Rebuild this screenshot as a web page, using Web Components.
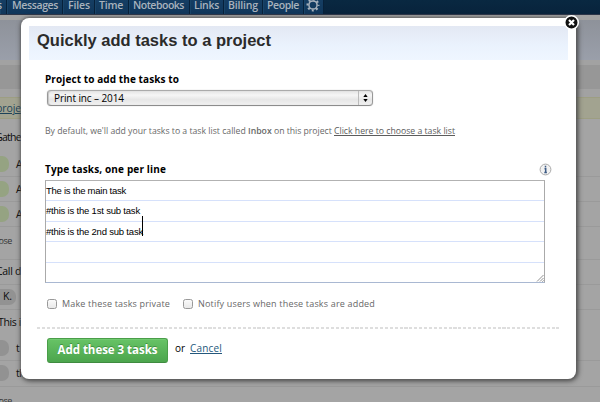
<!DOCTYPE html>
<html lang="en"><head><meta charset="utf-8"><title>Quickly add tasks to a project</title>
<style>
html,body{margin:0;height:100%;overflow:hidden;background:#a3a3a3}
body{font:10px "Open Sans","Noto Sans",sans-serif;color:#000}
</style></head><body>
<task-app></task-app>
<script>
const define=(name,html,setup)=>{
  const t=document.createElement('template');t.innerHTML=html;
  customElements.define(name,class extends HTMLElement{
    constructor(){super();this.attachShadow({mode:'open'}).append(t.content.cloneNode(true));}
    connectedCallback(){if(setup)setup(this,this.shadowRoot);}
  });
};

/* Text whose tracking is tuned so that the run fills the width in "w". */
define('fit-text',`<style>:host{display:inline-block;white-space:pre;flex:none;text-decoration:inherit}span{display:inline-block;text-decoration:inherit}</style><span><slot></slot></span>`,(el,r)=>{
  const s=r.querySelector('span'),w=+el.getAttribute('w');
  const n=el.textContent.length;
  s.style.letterSpacing=(w-s.getBoundingClientRect().width)/n+'px';
  el.style.width=w+'px';
});

define('nav-item',`<style>
:host{display:flex;box-sizing:border-box;height:14px;padding-left:5px;border-right:1px solid #07213a;box-shadow:inset 1px 0 #194468;background:linear-gradient(#153e63,#10365a);flex:none}
.t{font:600 10.5px/14px "Open Sans","Noto Sans",sans-serif;color:#a9b3bd;height:14px;margin-top:-2px}
</style><div class="t"><slot></slot></div>`,(el)=>{el.style.width=el.getAttribute('width')+'px';});

define('nav-bar',`<style>
:host{display:flex;flex:none;height:14px;background:linear-gradient(#092841,#08233c);border-bottom:1px solid #2c3548}
svg{display:block;margin:0 0 0 -3px}
</style>
<nav-item width="7" style="padding-left:0"><fit-text w="5" style="margin-left:-3px">s</fit-text></nav-item>
<nav-item width="56"><fit-text w="46">Messages</fit-text></nav-item>
<nav-item width="32"><fit-text w="22">Files</fit-text></nav-item>
<nav-item width="34" style="padding-left:4px"><fit-text w="24">Time</fit-text></nav-item>
<nav-item width="61" style="padding-left:4px"><fit-text w="51">Notebooks</fit-text></nav-item>
<nav-item width="34" style="padding-left:4px"><fit-text w="25">Links</fit-text></nav-item>
<nav-item width="39" style="padding-left:4px"><fit-text w="30">Billing</fit-text></nav-item>
<nav-item width="41" style="padding-left:4px"><fit-text w="32">People</fit-text></nav-item>
<nav-item width="20"><svg width="14" height="14" viewBox="-7 -7 14 14" fill="none" stroke="#a9b3bd"><circle r="4.1" stroke-width="1.5"/><circle r="5.5" stroke-width="2" stroke-dasharray="2 2.32" stroke-dashoffset="1"/></svg></nav-item>`);

define('list-row',`<style>
:host{display:flex;box-sizing:border-box;align-items:center;border-bottom:1px solid #9a9a9a;flex:none;font:10.5px/14px "Open Sans","Noto Sans",sans-serif;color:#0c0c0c;white-space:nowrap}
:host([plain]){border-bottom-color:transparent}
.pill{display:none;height:16px;border-radius:0 7px 7px 0;background:#929292;box-sizing:border-box;width:9px;margin-right:7px}
:host([pill]) .pill{display:block}
:host([pill=green]) .pill{background:#95a382}
:host([pill=name]) .pill{width:16px;padding-left:3px;margin-right:0}
:host([small]){font-size:9px;color:#343434;text-decoration:underline}
</style><div class="pill"><slot name="pill"></slot></div><slot></slot>`,(el)=>{el.style.height=el.getAttribute('h')+'px';});

define('page-behind',`<style>
:host{display:flex;flex-direction:column;height:402px;overflow:hidden;background:#a4a4a4}
.gap{height:5px;background:#a2a2a2;flex:none}
.band{height:40px;background:linear-gradient(#8e929a,#9a9faa);flex:none}
.bar{height:24px;background:#979797;flex:none}
.note{height:22px;box-sizing:border-box;border:1px solid #9d9e82;border-width:1px 0;background:#a2a390;flex:none;font:10.5px/20px "Open Sans","Noto Sans",sans-serif;color:#1d4359;text-decoration:underline}
</style>
<nav-bar></nav-bar>
<div class="gap"></div><div class="band"></div><div class="gap"></div><div class="bar"></div><div class="gap" style="height:8px"></div>
<div class="note"><fit-text w="25" style="margin-left:-4px">proje</fit-text></div>
<list-row h="33" plain style="padding-top:3px"><fit-text w="26" style="margin-left:-5px">Gathe</fit-text></list-row>
<list-row h="25" pill="green"><fit-text w="6">A</fit-text></list-row>
<list-row h="25" pill="green"><fit-text w="6">A</fit-text></list-row>
<list-row h="25" pill="green"><fit-text w="6">A</fit-text></list-row>
<list-row h="33" small style="padding-bottom:4px"><fit-text w="13.5" style="margin-left:-1.5px">ose</fit-text></list-row>
<list-row h="25" style="padding-bottom:2px"><fit-text w="25" style="margin-left:-4px">Call d</fit-text></list-row>
<list-row h="25" pill="name"><fit-text slot="pill" w="9">K.</fit-text></list-row>
<list-row h="26" plain style="padding-bottom:2px"><fit-text w="23" style="margin-left:-2px">This i</fit-text></list-row>
<list-row h="25" pill><fit-text w="4">t</fit-text></list-row>
<list-row h="26" pill style="padding-bottom:1px"><fit-text w="9">th</fit-text></list-row>
<list-row h="28" small plain><fit-text w="13.5" style="margin-left:-1.5px">ose</fit-text></list-row>`);

define('select-box',`<style>
:host{display:flex;box-sizing:border-box;width:326px;height:16px;border:1px solid #989898;border-top-color:#aaa;border-bottom-color:#8c8c8c;border-radius:4px;background:linear-gradient(#e4e4e4,#f5f5f5 30%,#e6e6e6 60%,#f1f1f1);box-shadow:inset 1px 0 1px #c5c5c5,0 0 1px #aaa;align-items:center;justify-content:space-between}
.v{padding-left:6px;font:10px/14px "Open Sans","Noto Sans",sans-serif}
.a{height:14px;width:13px;border-left:1px solid #bbb;display:flex;align-items:center;justify-content:center}
svg{display:block}
</style><div class="v"><slot></slot></div><div class="a"><svg width="5" height="8" viewBox="0 0 5 8"><path d="M2.5 0L4.7 3H.3zM2.5 8L4.7 5H.3z"/></svg></div>`);

define('ruled-area',`<style>
:host{display:block;box-sizing:border-box;width:500px;height:103.5px;border:1px solid #aaa;border-top:1px solid #b2b2b2;border-bottom:1px solid #a9b8d2;background:#fff;position:relative}
.row{display:flex;box-sizing:border-box;height:20.6px;border-bottom:1px solid #d6e1fb;align-items:center;font:9.5px/19px "Liberation Sans",Arial,sans-serif}
.row:last-of-type{border:0;height:19px}
.caret{width:1.3px;height:20px;background:#000;margin:-11px 0 0 -1px}
svg{position:absolute;right:0;bottom:0}
</style>
<div class="row"><fit-text w="80">The is the main task</fit-text></div>
<div class="row"><fit-text w="94">#this is the 1st sub task</fit-text></div>
<div class="row"><fit-text w="97">#this is the 2nd sub task</fit-text><div class="caret"></div></div>
<div class="row"></div><div class="row"></div>
<svg width="8" height="8" viewBox="0 0 8 8" stroke="#777" stroke-width=".8"><path d="M1 7.5L7.5 1M4 7.5L7.5 4M6.3 7.8L7.8 6.3"/></svg>`);

define('check-box',`<style>
:host{display:flex;align-items:center;color:#686868;font:9px/12px "Open Sans","Noto Sans",sans-serif;flex:none}
i{box-sizing:border-box;width:10px;height:10px;border:1px solid #999;border-radius:2.5px;background:linear-gradient(#fafafa,#e9e9e9);margin-right:5px}
</style><i></i><slot></slot>`);

define('green-button',`<style>
:host{display:flex;box-sizing:border-box;width:121px;height:25px;border:1px solid #4a9e49;border-bottom-color:#3f8b40;border-radius:3px;background:linear-gradient(#67c366,#4ca54d);box-shadow:inset 0 1px #70ca70;align-items:center;justify-content:center;color:#fff;font:700 11.5px/16px "Open Sans","Noto Sans",sans-serif;text-shadow:0 -1px #3f9140;flex:none}
</style><slot></slot>`);

define('task-dialog',`<style>
:host{display:flex;flex-direction:column;box-sizing:border-box;position:absolute;left:21px;top:18px;width:555px;height:361px;background:#fff;border-radius:8px;box-shadow:0 0 2px 0 #666,1px 1px 5px 1px #444;padding:8px 8px 0}
.head{width:539px;height:34px;box-sizing:border-box;background:linear-gradient(#e3e8f3,#eaf2fd 55%,#eff6ff);padding:4px 0 0 8px;font:700 16.5px/20px "Liberation Sans",Arial,sans-serif;color:#2b2b2b}
.body{padding-left:16px;display:flex;flex-direction:column}
.label{font:700 10px/14px "Open Sans","Noto Sans",sans-serif;height:14px;color:#000}
.help{display:flex;font:8.7px/12px "Open Sans","Noto Sans",sans-serif;color:#686868;margin-top:19px;height:12px}
.u{text-decoration:underline;color:#5c5c5c}
.lr{display:flex;justify-content:space-between;align-items:center;width:507px;margin-top:25px;height:14px}
.checks{display:flex;gap:13px;margin:14.5px 0 0 2px;height:12px;align-items:center}
.dash{height:2px;width:524px;margin:17px 0 0 8px;background:repeating-linear-gradient(90deg,#dedede 0 3px,transparent 3px 4.9px)}
.foot{display:flex;margin:9px 0 0 18px}
.or{font:10px/14px "Open Sans","Noto Sans",sans-serif;margin:3px 0 0 7px}
.close{position:absolute;right:-4px;top:-4px}
svg{display:block}
</style>
<div class="head"><fit-text w="234">Quickly add tasks to a project</fit-text></div>
<div class="body">
 <div class="label" style="margin-top:12px"><fit-text w="134">Project to add the tasks to</fit-text></div>
 <select-box style="margin:4px 0 0 2px"><fit-text w="70">Print inc – 2014</fit-text></select-box>
 <div class="help"><fit-text w="203">By default, we'll add your tasks to a task list called </fit-text><fit-text w="26" style="font-weight:600">Inbox </fit-text><fit-text w="60">on this project </fit-text><fit-text class="u" style="text-decoration:underline" w="121">Click here to choose a task list</fit-text></div>
 <div class="lr"><div class="label"><fit-text w="121">Type tasks, one per line</fit-text></div>
 <svg width="13" height="13" viewBox="-6.5 -6.5 13 13"><circle r="5.4" fill="#f2f2f2" stroke="#aaa"/><path d="M0-3.7V-2M-1-.8H.2V3M-1.2 3H1.4" fill="none" stroke="#3e5c85" stroke-width="1.5"/></svg></div>
 <ruled-area style="margin-top:3.5px"></ruled-area>
 <div class="checks"><check-box><fit-text w="108">Make these tasks private</fit-text></check-box><check-box><fit-text w="177">Notify users when these tasks are added</fit-text></check-box></div>
</div>
<div class="dash"></div>
<div class="foot"><green-button><fit-text w="100">Add these 3 tasks</fit-text></green-button>
<div class="or"><fit-text w="10">or</fit-text></div><div class="or" style="margin-left:5px;color:#24587c;text-decoration:underline"><fit-text w="32">Cancel</fit-text></div></div>
<svg class="close" width="17" height="17" viewBox="-8.5 -8.5 17 17"><circle r="6.8" fill="#111" stroke="#fff" stroke-width="1.6"/><path d="M-2.5-2.5L2.5 2.5M2.5-2.5L-2.5 2.5" stroke="#fff" stroke-width="2.2"/></svg>`);

define('task-app',`<style>:host{display:block;position:relative;width:600px;height:402px;overflow:hidden}</style>
<page-behind></page-behind><task-dialog></task-dialog>`);
</script></body></html>
